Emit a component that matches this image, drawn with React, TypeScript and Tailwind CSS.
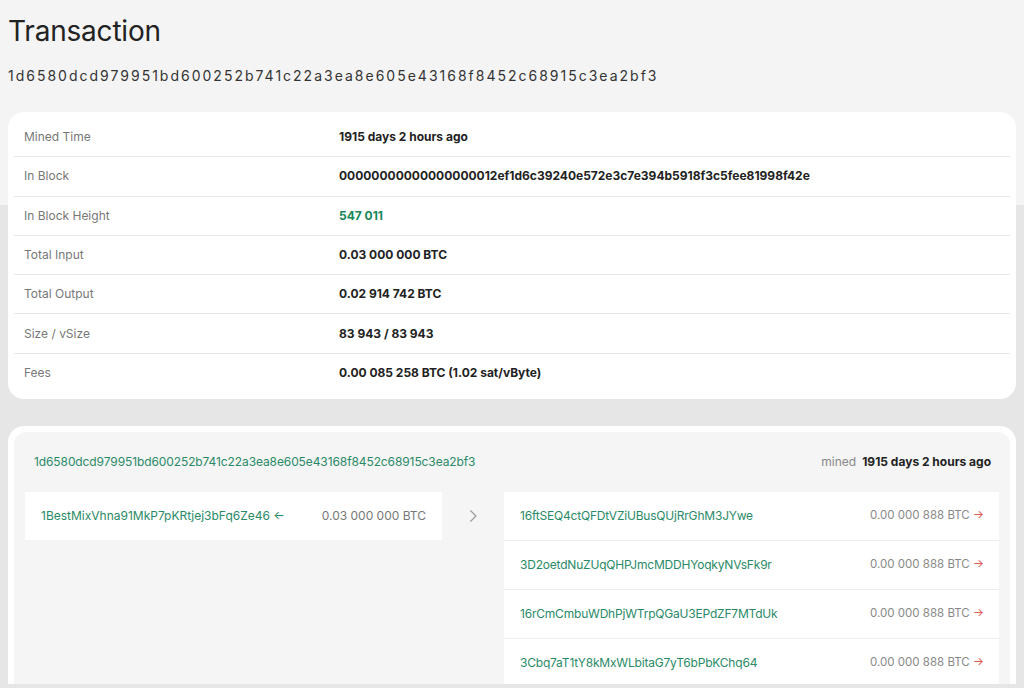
import React from 'react';

const txid = '1d6580dcd979951bd600252b741c22a3ea8e605e43168f8452c68915c3ea2bf3';

const details: { label: string; value: string; green?: boolean }[] = [
  { label: 'Mined Time', value: '1915 days 2 hours ago' },
  { label: 'In Block', value: '00000000000000000012ef1d6c39240e572e3c7e394b5918f3c5fee81998f42e' },
  { label: 'In Block Height', value: '547 011', green: true },
  { label: 'Total Input', value: '0.03 000 000 BTC' },
  { label: 'Total Output', value: '0.02 914 742 BTC' },
  { label: 'Size / vSize', value: '83 943 / 83 943' },
  { label: 'Fees', value: '0.00 085 258 BTC (1.02 sat/vByte)' },
];

const outputs = [
  '16ftSEQ4ctQFDtVZiUBusQUjRrGhM3JYwe',
  '3D2oetdNuZUqQHPJmcMDDHYoqkyNVsFk9r',
  '16rCmCmbuWDhPjWTrpQGaU3EPdZF7MTdUk',
  '3Cbq7aT1tY8kMxWLbitaG7yT6bPbKChq64',
];

export default function App() {
  return (
    <div
      className="h-[688px] overflow-hidden flex flex-col bg-[linear-gradient(to_bottom,#f4f4f4_205px,#e6e6e6_205px)] text-[#222]"
      style={{ fontFamily: 'Inter, "Noto Sans", sans-serif' }}
    >
      {/* Header */}
      <div className="px-2 pt-[14px]">
        <h1 className="text-[28px] leading-[34px] text-[#222] tracking-[-0.2px]">Transaction</h1>
        <div className="mt-[18px] text-[14px] leading-[20px] tracking-[2px] text-[#333]">{txid}</div>
      </div>

      {/* Details card */}
      <div className="mx-2 mt-[26px] bg-white rounded-2xl p-[6px]">
        {details.map((d, i) => (
          <div
            key={d.label}
            className={`flex items-center h-[39.3px] px-[10px] ${i < details.length - 1 ? 'border-b border-[#e8e8e8]' : ''}`}
          >
            <div className="w-[315px] text-[12px] text-[#777]">{d.label}</div>
            <div className={`text-[12px] font-bold ${d.green ? 'text-[#17875a]' : 'text-[#222]'}`}>{d.value}</div>
          </div>
        ))}
      </div>

      {/* Transaction flow */}
      <div className="mx-2 mt-[27px] flex-1 min-h-0 bg-white rounded-t-2xl px-[6px] pt-[6px] overflow-hidden">
        <div className="h-full bg-[#f5f5f5] rounded-t-xl px-[11px] pt-[21px]">
          <div className="flex items-center justify-between h-[18px] px-[9px] pr-[8px]">
            <span className="text-[12px] text-[#2a8a68] tracking-[-0.1px]">{txid}</span>
            <span className="text-[12px]">
              <span className="text-[#888] mr-[6px]">mined</span>
              <span className="font-bold text-[#222]">1915 days 2 hours ago</span>
            </span>
          </div>

          <div className="flex mt-[21px]">
            <div className="w-[417px] self-start bg-white h-[48px] flex items-center justify-between px-4">
              <span className="text-[12px] text-[#2a8a68]">1BestMixVhna91MkP7pKRtjej3bFq6Ze46 ←</span>
              <span className="text-[12px] text-[#777]">0.03 000 000 BTC</span>
            </div>

            <div className="w-[62px] h-[48px] flex items-center justify-center">
              <svg width="14" height="14" viewBox="0 0 24 24" fill="none" stroke="#9a9a9a" strokeWidth="2" strokeLinecap="round" strokeLinejoin="round">
                <path d="M8 3l9 9-9 9" />
              </svg>
            </div>

            <div className="flex-1 flex flex-col">
              {outputs.map((a, i) => (
                <div
                  key={a}
                  className={`bg-white flex items-center justify-between pl-4 pr-[15px] ${i > 0 ? 'h-[49px] border-t border-[#eeeeee]' : 'h-[48px]'}`}
                >
                  <span className="text-[12px] text-[#2a8a68] tracking-[-0.2px]">{a}</span>
                  <span className="text-[11.5px] text-[#888]">
                    0.00 000 888 BTC <span className="text-[#e0584f]">→</span>
                  </span>
                </div>
              ))}
            </div>
          </div>
        </div>
      </div>
      <div className="h-[4px] shrink-0 bg-[#e6e6e6]" />
    </div>
  );
}
